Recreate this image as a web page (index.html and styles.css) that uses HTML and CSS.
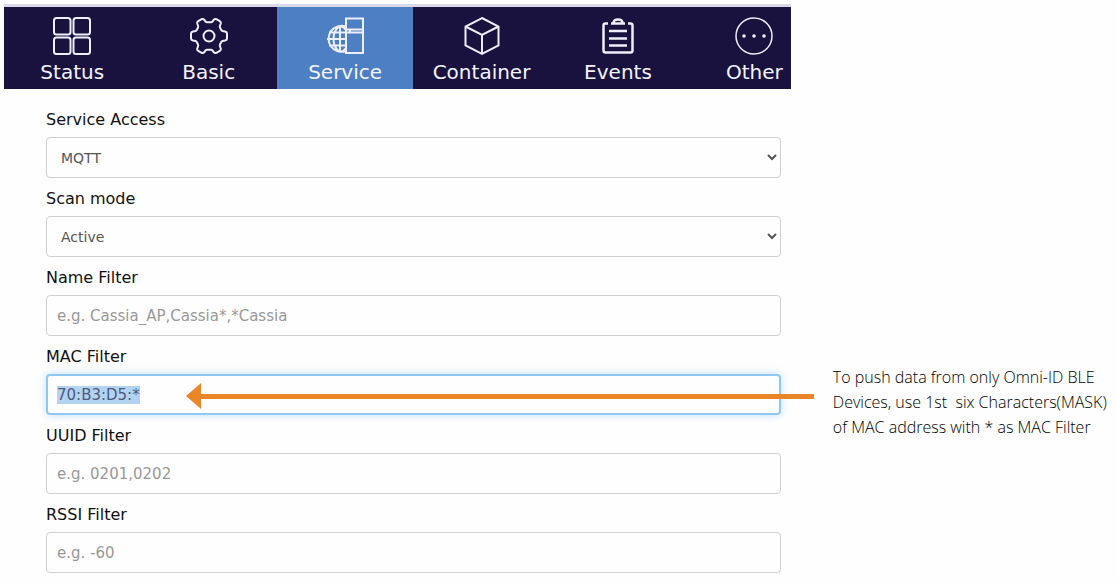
FILE: index.html
```html
<!DOCTYPE html>
<html lang="en">
<head>
  <meta charset="UTF-8">
  <meta name="viewport" content="width=device-width, initial-scale=1.0">
  <title>Service Settings</title>
  <link rel="stylesheet" href="styles.css">
</head>
<body>
  <div class="page">
    <main class="panel">
      <nav class="tabs">
        <a class="tab" href="#status">
          <svg class="icon" viewBox="0 0 40 40">
            <rect x="2" y="2" width="16.500" height="16.500" rx="2.500"/>
            <rect x="21.500" y="2" width="16.500" height="16.500" rx="2.500"/>
            <rect x="2" y="21.500" width="16.500" height="16.500" rx="2.500"/>
            <rect x="21.500" y="21.500" width="16.500" height="16.500" rx="2.500"/>
          </svg>
          <span>Status</span>
        </a>
        <a class="tab" href="#basic">
          <svg class="icon" viewBox="0 0 40 40">
            <path d="M36 15.500Q38 16 38 17.500V22.500Q38 24 36 24.500L33.500 25Q32.500 25.300 32 26.500L31 28.500Q30.600 29.500 31 30.500L31.800 32.500Q32.200 34 30.800 34.800L27.300 36.800Q26 37.500 24.800 36.300L23.500 34.500Q22.800 33.800 22 33.800H18Q17.200 33.800 16.500 34.500L15.200 36.300Q14 37.500 12.700 36.800L9.200 34.800Q7.800 34 8.200 32.500L9 30.500Q9.400 29.500 9 28.500L8 26.500Q7.500 25.300 6.500 25L4 24.500Q2 24 2 22.500V17.500Q2 16 4 15.500L6.500 15Q7.500 14.700 8 13.500L9 11.500Q9.400 10.500 9 9.500L8.200 7.500Q7.800 6 9.200 5.200L12.700 3.200Q14 2.500 15.200 3.700L16.500 5.500Q17.200 6.200 18 6.200H22Q22.800 6.200 23.500 5.500L24.800 3.700Q26 2.500 27.300 3.200L30.800 5.200Q32.200 6 31.800 7.500L31 9.500Q30.600 10.500 31 11.500L32 13.500Q32.500 14.700 33.500 15Z"/>
            <circle cx="20" cy="20" r="5.500"/>
          </svg>
          <span>Basic</span>
        </a>
        <a class="tab active" href="#service">
          <svg class="icon" viewBox="0 0 40 40">
            <path d="M21 10.500A13 13 0 1 0 21 35M15 10V36M21 14Q18 10 15 10Q8.500 14 8.500 23T15 36Q18 36 21 32M2 23H21M4 16.500H21M4 29.500H21"/>
            <path d="M21 2.500H38V37H21ZM21 13.500H38M21 16.500H38M25 13.500V16.500"/>
          </svg>
          <span>Service</span>
        </a>
        <a class="tab" href="#container">
          <svg class="icon" viewBox="0 0 40 40">
            <path d="M20 2L36.500 10.500V29.500L20 38L3.500 29.500V10.500ZM3.500 10.500L20 19L36.500 10.500M20 19V38"/>
          </svg>
          <span>Container</span>
        </a>
        <a class="tab" href="#events">
          <svg class="icon icon-bold" viewBox="0 0 40 40">
            <path d="M10 7.500H7.500Q5.500 7.500 5.500 9.500V34.500Q5.500 36.500 7.500 36.500H32.500Q34.500 36.500 34.500 34.500V9.500Q34.500 7.500 32.500 7.500H30M13 7.500H27M15.500 7Q15.500 3.500 20 3.500T24.500 7M11 15H29M11 22.500H29M11 29.500H29"/>
          </svg>
          <span>Events</span>
        </a>
        <a class="tab" href="#other">
          <svg class="icon icon-thin" viewBox="0 0 40 40">
            <circle cx="20" cy="20" r="18"/>
            <circle class="dot" cx="10" cy="20" r="1.800"/>
            <circle class="dot" cx="20" cy="20" r="1.800"/>
            <circle class="dot" cx="30" cy="20" r="1.800"/>
          </svg>
          <span>Other</span>
        </a>
      </nav>

      <form class="settings">
        <div class="field">
          <label for="access">Service Access</label>
          <select id="access">
            <option>MQTT</option>
          </select>
        </div>
        <div class="field">
          <label for="scan">Scan mode</label>
          <select id="scan">
            <option>Active</option>
          </select>
        </div>
        <div class="field">
          <label for="name">Name Filter</label>
          <input type="text" id="name" placeholder="e.g. Cassia_AP,Cassia*,*Cassia">
        </div>
        <div class="field">
          <label for="mac">MAC Filter</label>
          <div class="callout">
            <input type="text" id="mac" value="70:B3:D5:*">
            <div class="arrow"></div>
          </div>
        </div>
        <div class="field">
          <label for="uuid">UUID Filter</label>
          <input type="text" id="uuid" placeholder="e.g. 0201,0202">
        </div>
        <div class="field">
          <label for="rssi">RSSI Filter</label>
          <input type="text" id="rssi" placeholder="e.g. -60">
        </div>
      </form>
    </main>

    <aside class="note">
      To push data from only Omni-ID BLE<br>
      Devices, use 1st &nbsp;six Characters(MASK)<br>
      of MAC address with * as MAC Filter
    </aside>
  </div>

  <script>
    // Start with the MAC filter selected
    const mac = document.getElementById("mac");
    mac.focus();
    mac.select();
  </script>
</body>
</html>
```

FILE: styles.css
```css
* {
  box-sizing: border-box;
}

body {
  margin: 0;
  background-color: #fefefe;
  font-family: Verdana, "DejaVu Sans", sans-serif;
  color: #111;
}

.page {
  display: grid;
  grid-template-columns: 36fr 13fr;
  column-gap: 42px;
  padding: 4px 0 8px 4px;
}

.panel,
.note {
  min-width: 0;
}

.tabs {
  display: flex;
  overflow: hidden;
  background-color: #19123f;
  border-top: 3px solid #d9d9e9;
}

/* The last tab runs past the edge of the bar */
.tab {
  flex: 0 0 calc(100% * 3 / 17.3);
  display: flex;
  flex-direction: column;
  align-items: center;
  height: 82px;
  padding-top: 9px;
  color: #f4f4ff;
  font-size: 20px;
  line-height: 24px;
  text-decoration: none;
}

.tab.active {
  background-color: #4d80c2;
}

.icon {
  width: 40px;
  height: 40px;
  margin-bottom: 4px;
  fill: none;
  stroke: #eeeefc;
  stroke-width: 2;
}

.icon-bold {
  stroke-width: 2.5;
}

.icon-thin {
  stroke-width: 1.5;
}

.dot {
  fill: #eeeefc;
  stroke: none;
}

.settings {
  display: flex;
  flex-direction: column;
  gap: 9px;
  padding: 19px 10px 0 42px;
}

label {
  display: block;
  margin-bottom: 5px;
  font-size: 16px;
  line-height: 24px;
}

input,
select {
  display: block;
  width: 100%;
  height: 41px;
  padding: 0 10px;
  border: 1px solid #d0d0d0;
  border-radius: 4px;
  background-color: #fefefe;
  color: #555;
  font-family: inherit;
  font-size: 15px;
}

select {
  padding-right: 0;
  font-size: 14px;
}

input::placeholder {
  color: #999;
}

input:focus {
  border: 2px solid #8fc8f4;
  padding: 0 9px;
  outline: none;
  box-shadow: 0 0 8px rgba(102, 175, 233, 0.4);
}

input::selection {
  background-color: #b3d3f3;
  color: #4d5b7c;
}

.callout {
  position: relative;
}

/* Points from the note to the MAC filter value */
.arrow {
  position: absolute;
  top: 20px;
  left: 150px;
  right: -33px;
  height: 5px;
  background-color: #e98627;
}

.arrow::before {
  content: "";
  position: absolute;
  top: -11px;
  left: -10px;
  border: 13px solid transparent;
  border-left: 0;
  border-right: 15px solid #e98627;
}

.note {
  margin-top: 361px;
  font-family: "Myriad Pro", "Open Sans", sans-serif;
  font-weight: 300;
  font-size: 16px;
  line-height: 25px;
  color: #000;
  white-space: nowrap;
}
```
